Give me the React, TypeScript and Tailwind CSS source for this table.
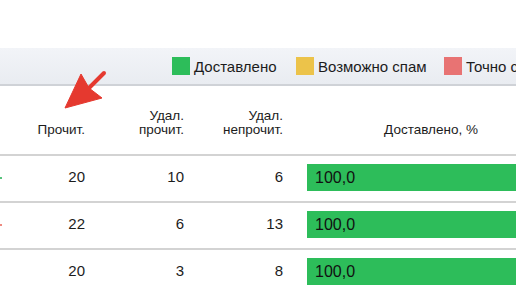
const legend = [
  { label: "Доставлено", color: "bg-[#2dbd5a]", width: "w-[124px]" },
  { label: "Возможно спам", color: "bg-[#ecc34a]", width: "w-[148px]" },
  { label: "Точно спам", color: "bg-[#e87373]", width: "" },
]

const rows = [
  { mark: "bg-[#57c27c]", read: 20, delRead: 10, delUnread: 6, pct: "100,0" },
  { mark: "bg-[#ee8a80]", read: 22, delRead: 6, delUnread: 13, pct: "100,0" },
  { mark: "", read: 20, delRead: 3, delUnread: 8, pct: "100,0" },
]

function Arrow() {
  return (
    <svg className="absolute left-0 top-0 pointer-events-none" width="130" height="120" viewBox="0 0 130 120">
      <line x1="89" y1="88" x2="104" y2="73" stroke="#e5392f" strokeWidth="4" strokeLinecap="round" />
      <polygon points="65,108 81,74 89,88 102,98" fill="#e5392f" stroke="#e5392f" strokeWidth="1" strokeLinejoin="round" />
    </svg>
  )
}

export default function App() {
  return (
    <div className="relative w-[516px] h-[290px] overflow-hidden bg-white text-[#1c1c1c] font-['Liberation_Sans',Arial,sans-serif]">
      <div className="h-[48px]" />

      {/* Legend */}
      <div className="h-[38px] border-b-2 border-[#cfd2d7] bg-linear-to-b from-[#f2f4f8] to-[#e9ecf1] flex items-center pl-[172px] whitespace-nowrap">
        {legend.map((item) => (
          <div key={item.label} className={`flex items-center gap-[4px] shrink-0 ${item.width}`}>
            <span className={`w-[18px] h-[18px] ${item.color}`} />
            <span className="text-[15px] leading-none">{item.label}</span>
          </div>
        ))}
      </div>

      <div className="w-[555px]">
        {/* Header */}
        <div className="grid grid-cols-[95px_99px_99px_1fr] h-[68px] items-end pb-[17px] text-[13.5px] leading-[14px]">
          <div className="text-right pr-[10px]">Прочит.</div>
          <div className="text-right pr-[10px]">
            Удал.
            <br />
            прочит.
          </div>
          <div className="text-right pr-[10px]">
            Удал.
            <br />
            непрочит.
          </div>
          <div className="text-center pl-[14px]">Доставлено, %</div>
        </div>

        {/* Rows */}
        {rows.map((row, i) => (
          <div
            key={i}
            className="grid grid-cols-[95px_99px_99px_1fr] h-[47px] border-t-2 border-[#d3d3d3] items-center pt-[8px] pb-[10px] text-[15px]"
          >
            <div className="flex items-center justify-between pr-[10px]">
              <span className={`w-[2px] h-[2px] ${row.mark}`} />
              <span>{row.read}</span>
            </div>
            <div className="text-right pr-[10px]">{row.delRead}</div>
            <div className="text-right pr-[10px]">{row.delUnread}</div>
            <div className="pl-[14px]">
              <div className="h-[27px] bg-[#2dbd5a] flex items-center pl-[8px] text-[16px] text-[#111]">{row.pct}</div>
            </div>
          </div>
        ))}
      </div>

      <Arrow />
    </div>
  )
}
